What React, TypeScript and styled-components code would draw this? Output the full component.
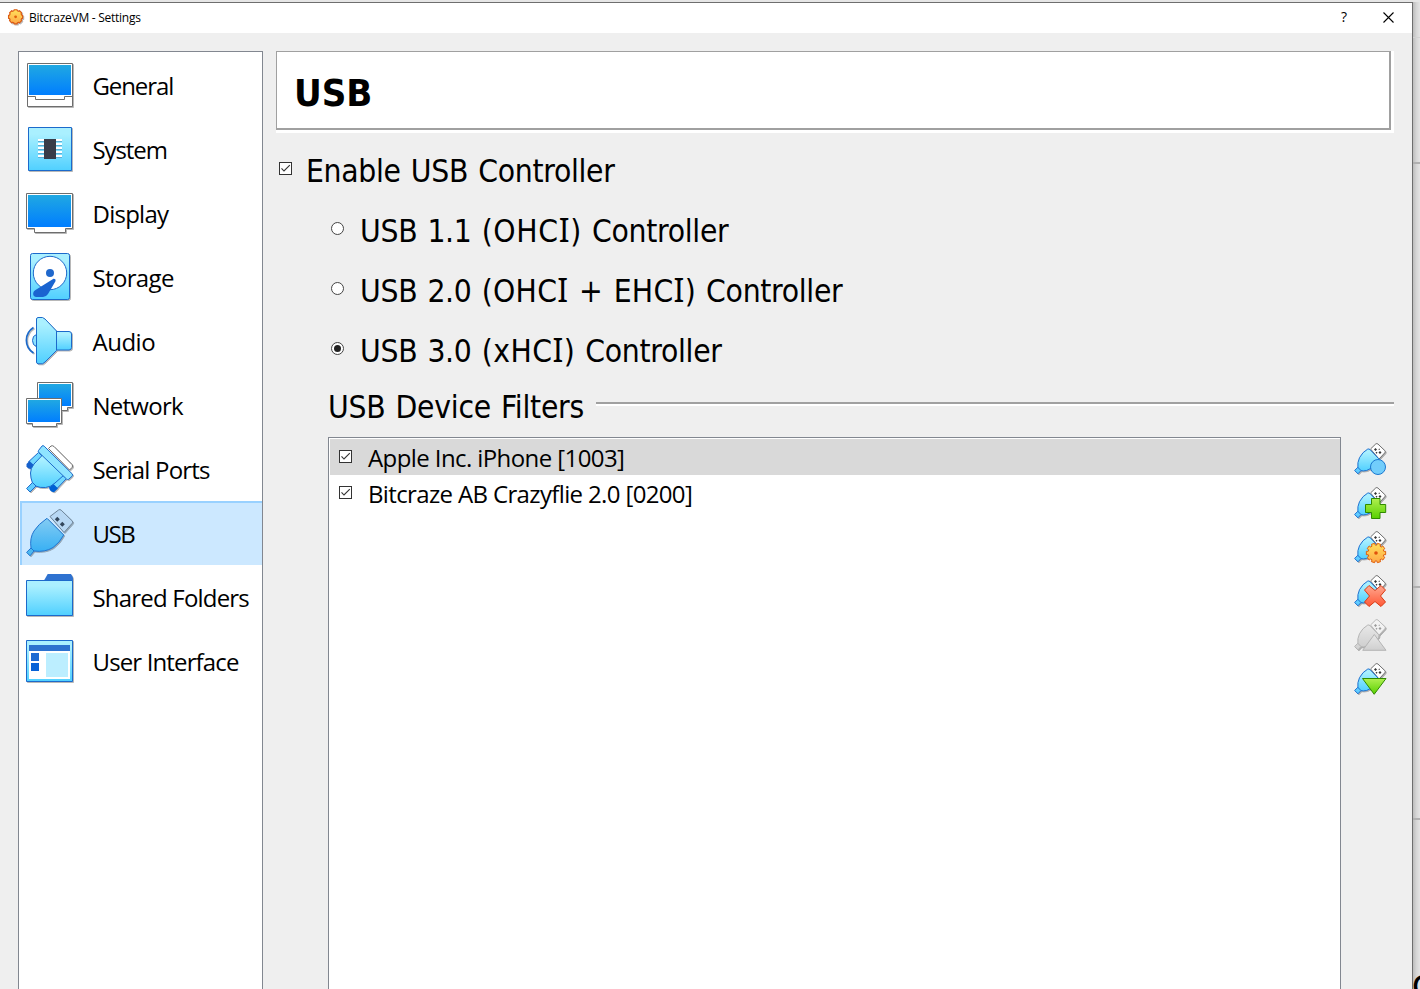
import React from "react";
import styled, { createGlobalStyle } from "styled-components";

const Global = createGlobalStyle`
  * { box-sizing: border-box; }
  body { margin: 0; background: #e4e4e4; overflow: hidden; color: #000; }
  svg { display: block; flex: none; overflow: visible; }
`;

const Desktop = styled.div`
  position: relative;
  width: 1420px;
  height: 989px;
  overflow: hidden;
  display: flex;
  padding-top: 2px;
  background: #e6e6e6;
`;
const Dialog = styled.div`
  width: 1413px;
  flex: none;
  display: flex;
  flex-direction: column;
  border-top: 1px solid #6e6e6e;
  border-right: 1px solid #6e6e6e;
  background: #efefef;
`;
const Behind = styled.div`
  flex: 1;
  display: flex;
  flex-direction: column;
  background: linear-gradient(90deg, #bdbdbd, #d6d6d6 50%, #e4e4e4);
`;
const Pane = styled.div<{ $h: number; $line: string }>`
  height: ${(p) => p.$h}px;
  border-bottom: ${(p) => p.$line};
  flex: none;
`;
const Fragment = styled.div`
  height: 30px;
  margin-top: 151px;
  margin-left: -1px;
  width: 8px;
  overflow: hidden;
  font: 500 30px/30px "Noto Sans", sans-serif;
`;
const TitleBar = styled.header`
  height: 30px;
  flex: none;
  display: flex;
  align-items: center;
  padding: 0 18px 2px 8px;
  background: #fff;
`;
const Title = styled.span`
  flex: 1;
  margin-left: 5px;
  padding-top: 2px;
  font: 12px/16px "Open Sans", sans-serif;
  letter-spacing: -0.27px;
`;
const Help = styled.span`
  width: 10px;
  margin-right: 32px;
  font: 14px/16px "Open Sans", sans-serif;
`;
const Body = styled.div`
  flex: 1;
  display: flex;
  padding-top: 18px;
  padding-left: 18px;
`;
const Sidebar = styled.nav`
  width: 245px;
  flex: none;
  border: 1px solid #828790;
  border-bottom: 0;
  background: #fff;
  padding: 1px 0 0 1px;
`;
const NavItem = styled.div<{ $active?: boolean }>`
  height: 64px;
  display: flex;
  align-items: center;
  padding-left: 6px;
  background: ${(p) => (p.$active ? "#cce8ff" : "transparent")};
  box-shadow: ${(p) => (p.$active ? "inset 2px 2px #99d1ff" : "none")};
`;
const NavLabel = styled.span<{ $ls: number }>`
  margin-left: 18.5px;
  padding-top: 1px;
  white-space: nowrap;
  font: 24px/32px "Open Sans", sans-serif;
  letter-spacing: ${(p) => p.$ls}px;
`;
const Content = styled.main`
  flex: 1;
  display: flex;
  flex-direction: column;
  margin-left: 13px;
  padding-right: 18px;
`;
const Heading = styled.h1`
  margin: 0;
  width: 1115px;
  height: 79px;
  flex: none;
  padding: 14px 0 0 17px;
  background: #fff;
  border: solid #a0a0a0;
  border-width: 1px 2px 2px 1px;
  box-shadow: 3px 3px #fff, 3px 0 #fff, 0 3px #fff;
  font: bold 38px/54px "DejaVu Sans Condensed", "DejaVu Sans", sans-serif;
  font-stretch: condensed;
  letter-spacing: -0.1px;
`;
const Options = styled.div`
  padding-top: 8px;
  height: 249px;
`;
const Option = styled.label<{ $nested?: boolean }>`
  height: 60px;
  flex: none;
  display: flex;
  align-items: center;
  gap: ${(p) => (p.$nested ? 16 : 14)}px;
  padding-left: ${(p) => (p.$nested ? 55 : 3)}px;
`;
const OptionText = styled.span`
  padding-top: 5px;
  white-space: nowrap;
  font: 31.5px/44px "DejaVu Sans Condensed", "DejaVu Sans", sans-serif;
  font-stretch: condensed;
  letter-spacing: -0.3px;
  word-spacing: 1.4px;
`;
const Bus = styled.span<{ $ls: number }>`
  letter-spacing: ${(p) => p.$ls}px;
`;
const SerifCap = styled.span`
  font-family: "Noto Sans", sans-serif;
  font-size: 32px;
  line-height: 1px;
`;
const GroupTitle = styled.div`
  height: 58px;
  flex: none;
  display: flex;
  align-items: flex-start;
  gap: 12px;
  padding-left: 52px;
`;
const GroupText = styled(OptionText)`
  width: 256px;
  flex: none;
  padding-top: 6px;
  letter-spacing: -0.26px;
`;
const Rule = styled.div`
  width: 798px;
  height: 4px;
  margin-top: 23px;
  border-top: 2px solid #a0a0a0;
  border-bottom: 2px solid #fff;
`;
const FilterArea = styled.div`
  flex: 1;
  display: flex;
  padding-left: 52px;
`;
const FilterList = styled.div`
  width: 1013px;
  border: 1px solid #828790;
  border-bottom: 0;
  padding: 1px 0 0 1px;
  background: #fff;
`;
const FilterRow = styled.div<{ $selected?: boolean }>`
  height: 36px;
  display: flex;
  align-items: center;
  gap: 16px;
  padding: 0 0 2px 9px;
  background: ${(p) => (p.$selected ? "#d9d9d9" : "transparent")};
`;
const FilterText = styled.span<{ $ls: number }>`
  padding-top: 3px;
  white-space: nowrap;
  font: 24px/32px "Open Sans", sans-serif;
  letter-spacing: ${(p) => p.$ls}px;
`;
const Tools = styled.div`
  display: flex;
  flex-direction: column;
  gap: 12px;
  margin-left: 14px;
  padding-top: 6px;
`;

const Defs = () => (
  <svg width="0" height="0" style={{ position: "absolute" }}>
    <defs>
      <linearGradient id="screen" x1="0" y1="0" x2="0" y2="1">
        <stop offset="0" stopColor="#20a8e2" />
        <stop offset="1" stopColor="#007eff" />
      </linearGradient>
      <linearGradient id="aqua" x1="0" y1="0" x2="0" y2="1">
        <stop offset="0.15" stopColor="#aaf0ff" />
        <stop offset="1" stopColor="#50d0ff" />
      </linearGradient>
      <linearGradient id="usbSel" x1="0" y1="0" x2="0" y2="1">
        <stop offset="0" stopColor="#84ccf3" />
        <stop offset="1" stopColor="#38b0f4" />
      </linearGradient>
      <linearGradient id="green" x1="0" y1="0" x2="0" y2="1">
        <stop offset="0" stopColor="#b0f050" />
        <stop offset="1" stopColor="#58d000" />
      </linearGradient>
      <linearGradient id="orange" x1="0" y1="0" x2="0" y2="1">
        <stop offset="0" stopColor="#ffe05a" />
        <stop offset="1" stopColor="#ffa848" />
      </linearGradient>
      <linearGradient id="red" x1="0" y1="0" x2="0" y2="1">
        <stop offset="0" stopColor="#ffa890" />
        <stop offset="1" stopColor="#ff5836" />
      </linearGradient>
      <linearGradient id="grey" x1="0" y1="0" x2="0" y2="1">
        <stop offset="0" stopColor="#e8e8e8" />
        <stop offset="1" stopColor="#cfcfcf" />
      </linearGradient>
      <filter id="drop" x="-10%" y="-10%" width="125%" height="125%" colorInterpolationFilters="sRGB">
        <feDropShadow dx="1" dy="1" stdDeviation="0.35" floodColor="#000" floodOpacity="0.28" />
      </filter>
    </defs>
  </svg>
);

const NavIcon = ({ children }: { children: React.ReactNode }) => (
  <svg width="48" height="48" viewBox="0 0 48 48" strokeLinejoin="round">
    <g filter="url(#drop)">{children}</g>
  </svg>
);

const BLUE = "#1c6acb";
const GREY = "#6e6e6e";

const icons = {
  general: (
    <NavIcon>
      <rect x="1.5" y="2.5" width="45" height="43" fill="#fff" stroke={GREY} />
      <rect x="3" y="4" width="42" height="30" fill="url(#screen)" />
      <path d="M1.5 35.5H9.5V38.5H38.5V35.5H46.5" fill="none" stroke={GREY} />
    </NavIcon>
  ),
  system: (
    <NavIcon>
      <rect x="2.5" y="2.5" width="43" height="43" fill="url(#aqua)" stroke={BLUE} />
      {[0, 1, 2, 3, 4].map((i) => (
        <g key={i}>
          <rect x="12" y={14 + i * 4} width="24" height="2" fill="#fff" />
          <rect x="12" y={16 + i * 4} width="24" height="1" fill="#5cb0d8" />
        </g>
      ))}
      <rect x="18" y="14" width="12" height="20" fill="#383d49" />
    </NavIcon>
  ),
  display: (
    <NavIcon>
      <path d="M.5 4.5H46.5V39.5H39.5V43.5H8.5V39.5H.5Z" fill="#fff" stroke={GREY} strokeLinejoin="miter" />
      <rect x="2" y="6" width="43" height="32" fill="url(#screen)" />
    </NavIcon>
  ),
  storage: (
    <NavIcon>
      <rect x="4.5" y=".5" width="39" height="46" rx="2" fill="url(#aqua)" stroke={BLUE} />
      <circle cx="24" cy="20" r="16.7" fill="#fff" stroke={BLUE} />
      <circle cx="24" cy="20" r="4" fill="#2068cc" />
      <path d="M27.500 25.700Q30 25.500 29.600 28L22 41Q20 44 17 44H10Q6.800 43.500 7.200 40 7.500 38 9.500 37Z" fill="#1a64d0" />
    </NavIcon>
  ),
  audio: (
    <NavIcon>
      <path d="M7.500 10.500C-2 16.500-2 30 7.500 36" fill="none" stroke={BLUE} strokeWidth="1.7" />
      <path d="M10.500 17.500Q6.500 18.500 6.500 23.500T10.500 29.500Z" fill="#8ee2ff" stroke={BLUE} />
      <path d="M30.500 14.500H43Q45.500 14.500 45.500 17V30.500Q45.500 33 43 33H30.500Z" fill="url(#aqua)" stroke={BLUE} />
      <path d="M12 .5H16.500L19 2 30.500 14V33.500L19 45 16.500 46.800H12Q10.500 46.500 10.500 45V2Q10.500.8 12 .5Z" fill="url(#aqua)" stroke={BLUE} />
    </NavIcon>
  ),
  network: (
    <NavIcon>
      <path d="M11.500 1.500H46.500V26.500H41.500V29.500H18V26.500H11.500Z" fill="#fff" stroke={GREY} strokeLinejoin="miter" />
      <rect x="13" y="3" width="32" height="22" fill="url(#screen)" />
      <path d="M.5 17.500H35.500V42.500H30.500V45.500H6.500V42.500H.5Z" fill="#fff" stroke={GREY} strokeLinejoin="miter" />
      <rect x="2" y="19" width="32" height="22" fill="url(#screen)" />
    </NavIcon>
  ),
  serial: (
    <NavIcon>
      <path d="M22.500 3.500 25 1Q26.500.2 28 1.500L46 19.500Q47.200 21 46 22.500L43.500 25Z" fill="#fff" stroke={GREY} />
      <path d="M12.500 7.500 16.500 11.500 7 21 2.500 16.800Z" fill="#72d8ff" stroke={BLUE} />
      <path d="M3.500 16 .5 19V21.500Q1.500 24 5 23.900L8.500 20.700Z" fill="#1560cc" />
      <path d="M36 29.500 40.500 33.500 31 43.500 26.500 39.500Z" fill="#72d8ff" stroke={BLUE} />
      <path d="M27 38.500 23 42.500Q23.500 46.500 28 47.200L32 43.500Z" fill="#0060d4" />
      <path d="M17 9.500 8 19Q4.500 23.500 4.500 28 4.500 33 6.500 38L9.500 41Q14 43 19.500 42.500 25 42 29 38L38 30Z" fill="url(#aqua)" stroke={BLUE} />
      <path d="M12.500 5.500 16 1Q17 0 18.300 1.300L46.300 29Q47 30.300 46 31.300L42.700 34.300Q41.500 35 40.500 34L12.500 7Q11.800 6.200 12.500 5.500Z" fill="#8fe4ff" stroke={BLUE} />
      <path d="M6.500 37.500 10 41 4 47 .6 43.500Z" fill="#60ccff" stroke={BLUE} />
    </NavIcon>
  ),
  usb: (
    <NavIcon>
      <path d="M24 7.500 32.500 1Q34 0 35.200 1.200L46.300 12Q47.200 13.300 46 14.500L38 23.500Z" fill="#b8d8f4" stroke="#6d8499" />
      <path d="M31.300 7.800 33.800 10.300 31.300 12.800 28.800 10.300ZM36.300 12.800 38.800 15.300 36.300 17.800 33.800 15.300Z" fill="#33475c" />
      <path d="M21 9.300 37.700 26Q33.500 34 27 38.500 19 43.500 8 42L5 39Q3.500 29 8 22 12 15.500 21 9.300Z" fill="url(#usbSel)" stroke="#2074d0" />
      <path d="M5 39 8 42 4 46.800 .6 43.300Z" fill="#4cb8f0" stroke="#2074d0" />
    </NavIcon>
  ),
  folder: (
    <NavIcon>
      <path d="M17.700 8 21.700 1H45L47 4.500V8Z" fill="#2f72d0" />
      <rect x=".5" y="7.500" width="46" height="35" fill="url(#aqua)" stroke={BLUE} />
    </NavIcon>
  ),
  ui: (
    <NavIcon>
      <rect x=".5" y="3.500" width="46" height="41" fill="url(#aqua)" stroke={BLUE} />
      <rect x="3" y="8" width="41" height="6" fill="#2c72cf" />
      <rect x="3" y="14" width="41" height="28" fill="#fff" />
      <rect x="5" y="16" width="8" height="8" fill="#1d6ad2" />
      <rect x="5" y="26" width="8" height="8" fill="#0862d6" />
      <rect x="20" y="16" width="22" height="24" fill="#bceeff" />
    </NavIcon>
  ),
};

const gearPath = (cx: number, cy: number, r: number, inner: number, teeth: number) => {
  const pts: string[] = [];
  for (let i = 0; i < teeth; i++) {
    const a = (i * 2 * Math.PI) / teeth;
    const w = Math.PI / teeth;
    [
      [a - w * 0.7, inner],
      [a - w * 0.55, r],
      [a + w * 0.55, r],
      [a + w * 0.7, inner],
    ].forEach(([t, d]) => pts.push(`${(cx + d * Math.cos(t)).toFixed(2)} ${(cy + d * Math.sin(t)).toFixed(2)}`));
  }
  return "M" + pts.join("L") + "Z";
};

const Tool = ({ disabled, children }: { disabled?: boolean; children: React.ReactNode }) => {
  const line = disabled ? "#b4b4b4" : "#1c6fd0";
  return (
    <svg width="32" height="32" viewBox="0 0 32 32" strokeLinejoin="round">
      <g filter="url(#drop)">
        <path d="M15.500 6 20.800 .9Q21.900 .1 23 1.100L29.800 7.600Q30.700 8.700 29.800 9.800L24 16Z" fill={disabled ? "#f2f2f2" : "#fff"} stroke={disabled ? "#b8b8b8" : GREY} />
        <path d="M20.500 4.900 22 6.400 20.500 7.900 19 6.400ZM25 8 26.500 9.500 25 11 23.500 9.500ZM21.500 8.700 22.500 9.700 21.500 10.700 20.500 9.700ZM24.200 5.500 25 6.300 24.200 7.100 23.400 6.300Z" fill={disabled ? "#999" : "#333"} />
        <path d="M12.700 6.100Q14 5.600 15 6.600L23.500 15.500Q24.500 16.500 23.500 18.500 18 26 11.500 27.500 8.500 28.200 5.500 27.700L2.900 25Q2.200 19.500 4.500 14.700 7.500 9 12.700 6.100Z" fill={disabled ? "url(#grey)" : "url(#aqua)"} stroke={line} />
        <path d="M2.800 24.300 6 27.500 3 30.800 -.4 27.500Z" fill={disabled ? "#d4d4d4" : "#60ccff"} stroke={line} />
      </g>
      {children}
    </svg>
  );
};

const CheckMark = () => (
  <svg width="13" height="13" viewBox="0 0 13 13">
    <rect x=".5" y=".5" width="12" height="12" fill="#fff" stroke="#333" />
    <path d="M2.500 6.300 5 9 10.800 3.200" fill="none" stroke="#333" strokeWidth="1.100" />
  </svg>
);
const RadioMark = ({ on }: { on?: boolean }) => (
  <svg width="13" height="13" viewBox="0 0 13 13">
    <circle cx="6.500" cy="6.500" r="6" fill="#fff" stroke="#444" />
    {on && <circle cx="6.500" cy="6.500" r="3.500" fill="#222" />}
  </svg>
);

const nav: { label: string; icon: keyof typeof icons; ls: number }[] = [
  { label: "General", icon: "general", ls: -1.1 },
  { label: "System", icon: "system", ls: -1.1 },
  { label: "Display", icon: "display", ls: -0.75 },
  { label: "Storage", icon: "storage", ls: -0.65 },
  { label: "Audio", icon: "audio", ls: -0.5 },
  { label: "Network", icon: "network", ls: -0.75 },
  { label: "Serial Ports", icon: "serial", ls: -0.8 },
  { label: "USB", icon: "usb", ls: -1.4 },
  { label: "Shared Folders", icon: "folder", ls: -0.8 },
  { label: "User Interface", icon: "ui", ls: -0.86 },
];

const controllers = [
  { version: "USB 1.1", bus: "(OHCI)", ls: 0.65, on: false },
  { version: "USB 2.0", bus: "(OHCI + EHCI)", ls: 0.27, on: false },
  { version: "USB 3.0", bus: "(xHCI)", ls: 0.45, on: true },
];

/* The dialog face has a serifed capital I. */
const withSerifCaps = (text: string) =>
  text.split(/(I)/).map((part, i) => (part === "I" ? <SerifCap key={i}>I</SerifCap> : part));

export default function App() {
  return (
    <Desktop>
      <Global />
      <Defs />
      <Dialog>
        <TitleBar>
          <svg width="16" height="16" viewBox="0 0 16 16">
            <g filter="url(#drop)">
              <path d={gearPath(7.6, 7.8, 7.2, 6.3, 8)} fill="url(#orange)" stroke="#dc5c14" strokeWidth="1.2" strokeLinejoin="round" />
              <circle cx="7.6" cy="7.8" r="1.4" fill="#e0600c" />
            </g>
          </svg>
          <Title>BitcrazeVM - Settings</Title>
          <Help>?</Help>
          <svg width="11" height="11" viewBox="0 0 11 11">
            <path d="M.5.500 10.500 10.500M10.500.500 .5 10.500" stroke="#000" strokeWidth="1.100" />
          </svg>
        </TitleBar>
        <Body>
          <Sidebar>
            {nav.map((n) => (
              <NavItem key={n.label} $active={n.label === "USB"}>
                {icons[n.icon]}
                <NavLabel $ls={n.ls}>{n.label}</NavLabel>
              </NavItem>
            ))}
          </Sidebar>
          <Content>
            <Heading>USB</Heading>
            <Options>
              <Option>
                <CheckMark />
                <OptionText>Enable USB Controller</OptionText>
              </Option>
              {controllers.map((c) => (
                <Option key={c.version} $nested>
                  <RadioMark on={c.on} />
                  <OptionText>
                    {c.version} <Bus $ls={c.ls}>{withSerifCaps(c.bus)}</Bus> Controller
                  </OptionText>
                </Option>
              ))}
            </Options>
            <GroupTitle>
              <GroupText>USB Device Filters</GroupText>
              <Rule />
            </GroupTitle>
            <FilterArea>
              <FilterList>
                <FilterRow $selected>
                  <CheckMark />
                  <FilterText $ls={-0.59}>Apple Inc. iPhone [1003]</FilterText>
                </FilterRow>
                <FilterRow>
                  <CheckMark />
                  <FilterText $ls={-0.64}>Bitcraze AB Crazyflie 2.0 [0200]</FilterText>
                </FilterRow>
              </FilterList>
              <Tools>
                <Tool>
                  <circle cx="23" cy="24" r="7.500" fill="#72cdfb" stroke="#1c78d0" />
                </Tool>
                <Tool>
                  <path d="M16.500 11.500H25V17.500H30.700V25.500H25V31.500H16.500V25.500H10.500V17.500H16.500Z" fill="url(#green)" stroke="#2f8a00" />
                </Tool>
                <Tool>
                  <path d={gearPath(21, 22, 9.8, 7.9, 10)} fill="url(#orange)" stroke="#e0600c" />
                  <circle cx="21" cy="22" r="1.800" fill="#e0500c" />
                </Tool>
                <Tool>
                  <path d="M14 10.500 20 15.500 26 10.500 30.500 15 25.500 21 30.500 27 26 31.500 20 26.500 14 31.500 9.500 27 14.500 21 9.500 15Z" fill="url(#red)" stroke="#d83a14" />
                </Tool>
                <Tool disabled>
                  <path d="M19.300 15.500 31 31.300H7.700Z" fill="url(#grey)" stroke="#b4b4b4" />
                </Tool>
                <Tool>
                  <path d="M7.500 15.500H31L19.200 31.300Z" fill="url(#green)" stroke="#2f8a00" />
                </Tool>
              </Tools>
            </FilterArea>
          </Content>
        </Body>
      </Dialog>
      <Behind>
        <Pane $h={36} $line="1px solid #d2d2d2" />
        <Pane $h={126} $line="2px solid #b0b0b0" />
        <Pane $h={424} $line="2px solid #b0b0b0" />
        <Pane $h={232} $line="2px solid #b0b0b0" />
        <Fragment>C</Fragment>
      </Behind>
    </Desktop>
  );
}
